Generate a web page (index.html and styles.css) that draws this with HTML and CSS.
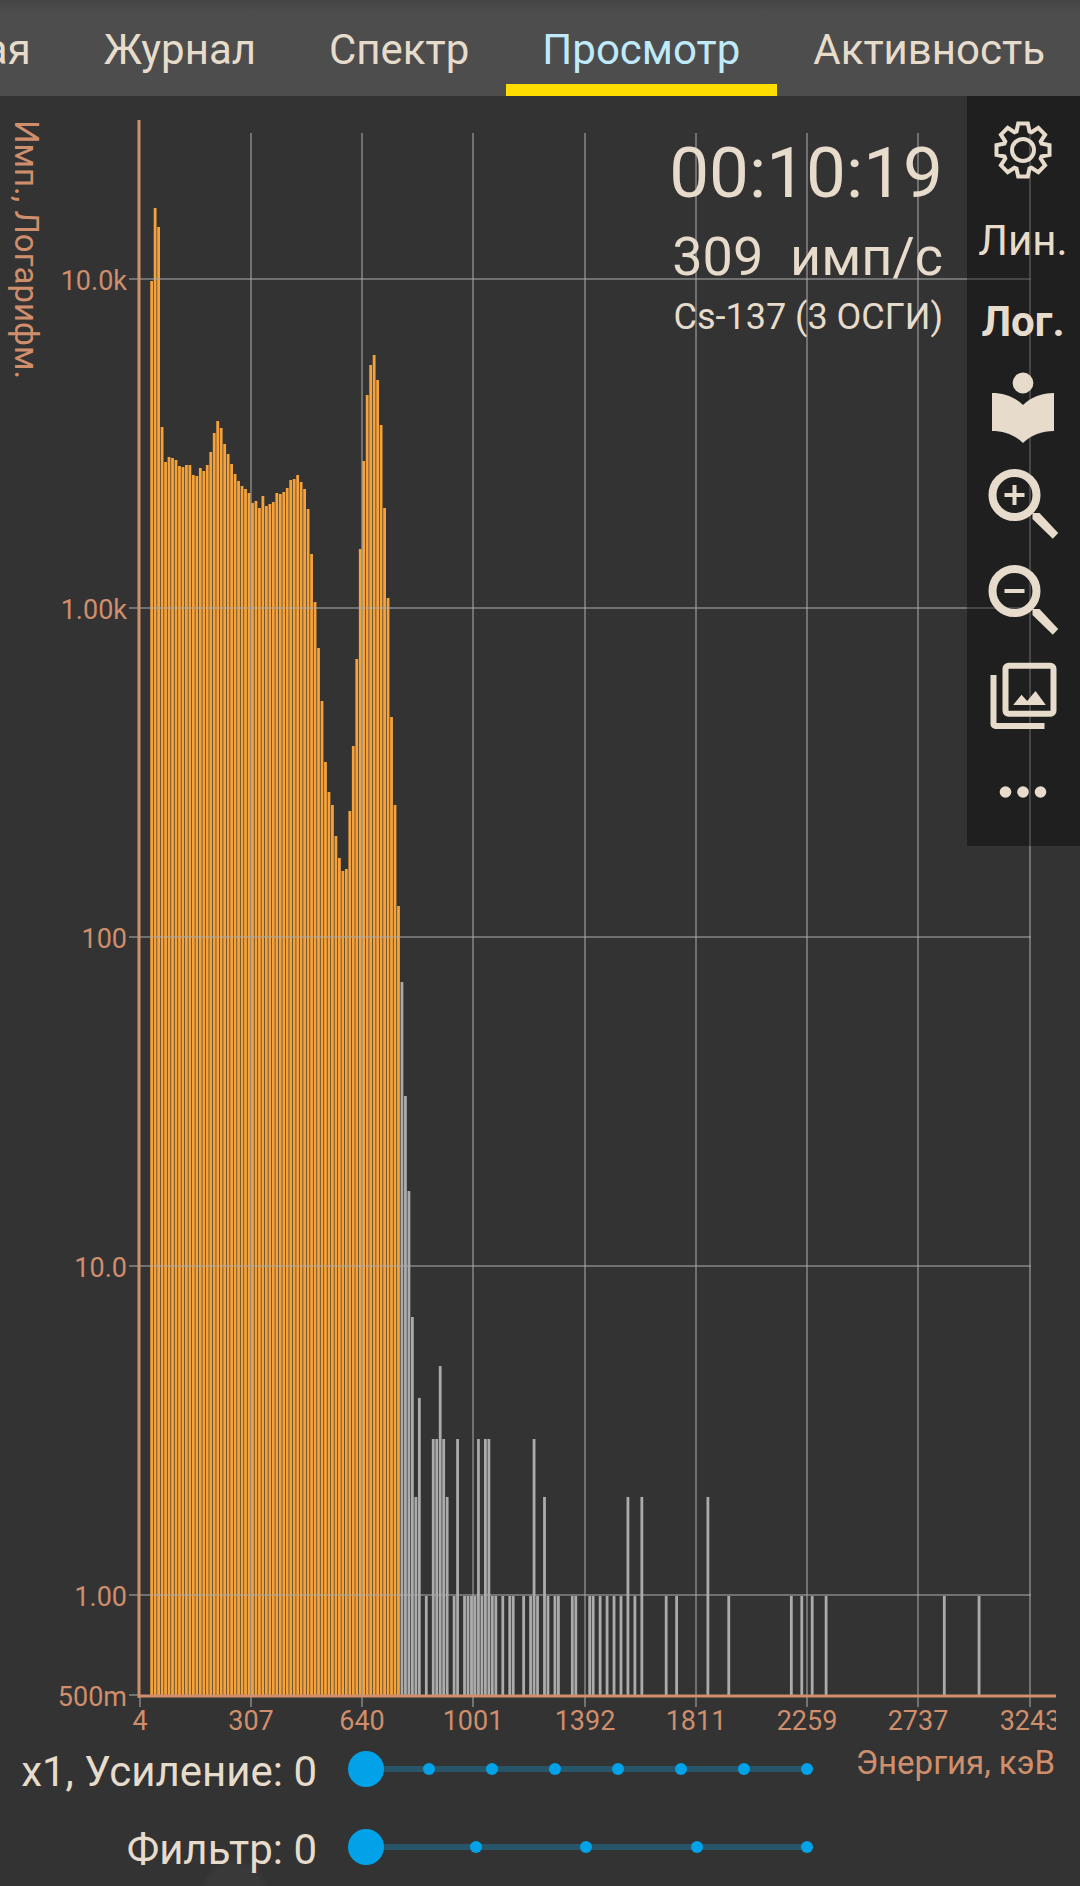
FILE: index.html
```html
<!DOCTYPE html>
<html lang="ru">
<head>
<meta charset="utf-8">
<meta name="viewport" content="width=device-width, initial-scale=1">
<title>Просмотр</title>
<link rel="stylesheet" href="styles.css">
</head>
<body>
<nav class="tabs">
  <a class="tab" href="#main">Главная</a>
  <a class="tab" href="#journal">Журнал</a>
  <a class="tab" href="#spectrum">Спектр</a>
  <a class="tab tab-active" href="#view" aria-current="page">Просмотр</a>
  <a class="tab" href="#activity">Активность</a>
</nav>
<main>
  <section class="chart">
    <svg class="plot" viewBox="0 0 1056 1634" role="img" aria-label="Cs-137">
      <g id="bars"></g>
      <g id="grid" class="grid"></g>
      <path class="axis" d="M139 24V1602M138 1600H1056"/>
      <g id="labels" class="labels"></g>
      <text class="caption" transform="translate(15 24) rotate(90)">Имп., Логарифм.</text>
    </svg>
    <div class="readout">
      <div class="time">00:10:19</div>
      <div class="rate">309&nbsp; имп/с</div>
      <div class="source">Cs-137 (3 ОСГИ)</div>
    </div>
    <div class="toolbar">
      <button class="tool" aria-label="Настройки"><svg class="icon" viewBox="-36 -36 72 72"><g class="line thin"><path d="M-6.500-18.500L-4.800-26.500L4.800-26.500L6.500-18.500L8.500-17.700L15.300-22.100L22.100-15.300L17.700-8.500L18.500-6.500L26.500-4.800L26.500 4.800L18.500 6.500L17.700 8.500L22.100 15.300L15.300 22.100L8.500 17.700L6.500 18.500L4.800 26.500L-4.800 26.500L-6.500 18.500L-8.500 17.700L-15.300 22.100L-22.100 15.300L-17.700 8.500L-18.500 6.500L-26.500 4.800L-26.500-4.800L-18.500-6.500L-17.700-8.500L-22.100-15.300L-15.300-22.100L-8.500-17.700Z"/><circle r="11"/></g></svg></button>
      <button class="tool tool-text">Лин.</button>
      <button class="tool tool-text tool-on" aria-pressed="true">Лог.</button>
      <button class="tool" aria-label="Библиотека"><svg class="icon" viewBox="-36 -36 72 72"><circle cy="-25" r="10.400"/><path d="M0-3C-8-11-19-15-31-15V23C-19 23-8 27 0 35C8 27 19 23 31 23V-15C19-15 8-11 0-3Z"/></svg></button>
      <button class="tool" aria-label="Увеличить"><svg class="icon" viewBox="-37 -36 72 72"><circle class="line thick" cx="-9.500" cy="-9" r="22"/><path d="M8.500 9H15.500L34.200 29L28.800 34.700L8.500 15Z"/><path class="line thin" d="M-19.500-9H.5M-9.500-19V1"/></svg></button>
      <button class="tool" aria-label="Уменьшить"><svg class="icon" viewBox="-37 -36 72 72"><circle class="line thick" cx="-9.500" cy="-9" r="22"/><path d="M8.500 9H15.500L34.200 29L28.800 34.700L8.500 15Z"/><path class="line thin" d="M-19.500-9H.5"/></svg></button>
      <button class="tool" aria-label="Снимки"><svg class="icon" viewBox="-37 -36 72 72"><g class="line medium"><rect x="-18.500" y="-30.300" width="48" height="48" rx="3"/><path d="M-30.500-21V28a2 2 0 0 0 2 2H20.500"/></g><path d="M-10.800 9L-2.500-1.300L3.200 5L11.500-5L21.800 9Z"/></svg></button>
      <button class="tool" aria-label="Ещё"><svg class="icon" viewBox="-36 -36 72 72"><circle cx="-17.500" r="5.800"/><circle r="5.800"/><circle cx="17.500" r="5.800"/></svg></button>
    </div>
  </section>
  <form class="controls">
    <label class="control-label" for="gain">x1, Усиление: 0</label>
    <div class="slider">
      <div class="ticks"><i></i><i></i><i></i><i></i><i></i><i></i><i></i><i></i></div>
      <input id="gain" type="range" min="0" max="7" value="0">
    </div>
    <div class="axis-title">Энергия, кэВ</div>
    <label class="control-label" for="filter">Фильтр: 0</label>
    <div class="slider">
      <div class="ticks"><i></i><i></i><i></i><i></i><i></i></div>
      <input id="filter" type="range" min="0" max="4" value="0">
    </div>
  </form>
</main>
<script src="chart.js"></script>
</body>
</html>
```
FILE: styles.css
```css
* { box-sizing: border-box; }

body {
  margin: 0;
  background: #333;
  color: #e7dccb;
  font-family: Roboto, "Noto Sans", sans-serif;
  font-size: 42px;
}

.tabs {
  display: flex;
  justify-content: flex-end;
  height: 96px;
  overflow: hidden;
  background: linear-gradient(#444, #4d4d4d 12px);
}

.tab {
  flex: none;
  padding: 4px 37px 0 36px;
  border-bottom: 12px solid transparent;
  color: inherit;
  line-height: 92px;
  text-decoration: none;
}

.tab:last-child { padding-right: 35px; }

.tab-active {
  border-color: #fd0;
  color: #bfeafa;
}

.chart { position: relative; padding-right: 24px; }

/* The last energy label is cut at the plot's right edge */
.plot {
  display: block;
  width: 100%;
  height: auto;
  overflow: visible;
  clip-path: inset(0 0 -12px 0);
}

.bar-selected { fill: #f5a23b; }
.bar { fill: #ababab; }
.grid { fill: none; stroke: rgba(170, 170, 170, .52); stroke-width: 2; }
.axis { fill: none; stroke: #cf8e6c; stroke-width: 3; }
.labels { fill: #cf8e6c; font-size: 27px; }
.y-label { text-anchor: end; }
.x-label { text-anchor: middle; }
.caption { fill: #cf8e6c; font-size: 33px; }

.readout {
  position: absolute;
  top: 34px;
  right: 137px;
  text-align: right;
}

.time { font-size: 71px; line-height: 85px; }
.rate { font-size: 54px; line-height: 84px; }
.source { font-size: 36px; line-height: 36px; }

.toolbar {
  position: absolute;
  top: 0;
  right: 0;
  display: flex;
  flex-direction: column;
  width: 113px;
  padding: 6px 1px 6px 0;
  background: rgba(0, 0, 0, .38);
}

.tool {
  display: flex;
  align-items: center;
  justify-content: center;
  height: 96px;
  padding: 0;
  border: 0;
  background: none;
  color: inherit;
  font: inherit;
}

.tool-text { height: 81px; padding-top: 4px; }
.tool-on { font-weight: 700; }

.icon { width: 72px; height: 72px; fill: currentColor; }
.line { fill: none; stroke: currentColor; }
.thin { stroke-width: 4; }
.medium { stroke-width: 6; }
.thick { stroke-width: 8; }

.controls {
  display: grid;
  grid-template-columns: 317px minmax(0, 1fr) auto;
  grid-auto-rows: 78px;
  column-gap: 31px;
  padding-right: 25px;
  background: radial-gradient(circle 36px at 235px calc(100% + 8px), #393939 80%, transparent);
}

.control-label {
  padding-top: 6px;
  line-height: 72px;
  text-align: right;
  white-space: nowrap;
}

.axis-title { color: #cf8e6c; font-size: 33px; line-height: 66px; }

.slider { display: grid; align-items: center; }
.slider > * { grid-area: 1 / 1; }

.ticks {
  display: flex;
  justify-content: space-between;
  padding: 0 12px;
  background: linear-gradient(#27566b, #27566b) center / calc(100% - 36px) 6px no-repeat;
}

.ticks i { width: 12px; height: 12px; border-radius: 50%; background: #02a2e8; }

input[type="range"] {
  width: 100%;
  height: 36px;
  margin: 0;
  appearance: none;
  background: none;
}

input[type="range"]::-webkit-slider-thumb {
  width: 36px;
  height: 36px;
  appearance: none;
  border-radius: 50%;
  background: #02a2e8;
}
```
FILE: chart.js
```js
const NS = "http://www.w3.org/2000/svg";
const LEFT = 140, RIGHT = 1030, TOP = 37, BASE = 1599;
const ONE = 1499, DECADE = 329;
const CHANNELS = 256, FIRST = 3, SELECTED_END = 74;
const step = (RIGHT - LEFT) / CHANNELS;

// Bar tops of the continuous part of the spectrum, from channel FIRST on
const tops = [
  185, 112, 131, 331, 366, 361, 362, 364, 370, 371, 369, 369, 379, 380, 372, 375,
  369, 356, 337, 325, 332, 348, 358, 368, 378, 385, 390, 393, 397, 407, 405, 412,
  400, 410, 408, 406, 397, 398, 396, 392, 384, 383, 379, 386, 393, 413, 458, 506,
  552, 605, 666, 696, 709, 740, 762, 775, 773, 715, 650, 563, 453, 365, 299, 269,
  259, 284, 329, 412, 502, 621, 709, 810, 886, 1000, 1095, 1221
];

// Channels of the sparse tail, by number of counts
const tail = {
  1: [82, 90, 93, 94, 95, 96, 98, 101, 102, 104, 106, 107, 110, 112, 114, 117, 119,
    120, 124, 125, 129, 130, 132, 134, 136, 138, 142, 151, 154, 169, 187, 190, 193,
    197, 231, 241],
  2: [79, 88, 116, 140, 144, 163],
  3: [84, 85, 87, 91, 97, 99, 100, 113],
  4: [80],
  5: [86]
};

function add(parent, name, attrs, text) {
  const el = document.createElementNS(NS, name);
  for (const key in attrs) el.setAttribute(key, attrs[key]);
  if (text) el.textContent = text;
  document.getElementById(parent).append(el);
}

function bar(channel, top) {
  add("bars", "rect", {
    class: channel <= SELECTED_END ? "bar-selected" : "bar",
    x: LEFT + (channel + 0.35) * step - 1.4, y: top, width: 2.8, height: BASE - top
  });
}

tops.forEach((top, i) => bar(FIRST + i, top));
for (const count in tail) {
  tail[count].forEach(ch => bar(ch, ONE + 1 - DECADE * Math.log10(count)));
}

["4", "307", "640", "1001", "1392", "1811", "2259", "2737", "3243"].forEach((text, i) => {
  const x = Math.floor(LEFT + i * 32 * step);
  add("grid", "path", { d: i ? `M${x} ${TOP}V1611` : `M${x} 1602V1611` });
  add("labels", "text", { class: "x-label", x, y: 1634 }, text);
});

["1.00", "10.0", "100", "1.00k", "10.0k"].forEach((text, i) => {
  const y = ONE - i * DECADE;
  add("grid", "path", { d: `M129 ${y}H${RIGHT + 1}` });
  add("labels", "text", { class: "y-label", x: 127, y: y + 11 }, text);
});
add("grid", "path", { d: "M129 1599H138" });
add("labels", "text", { class: "y-label", x: 127, y: 1610 }, "500m");
```
